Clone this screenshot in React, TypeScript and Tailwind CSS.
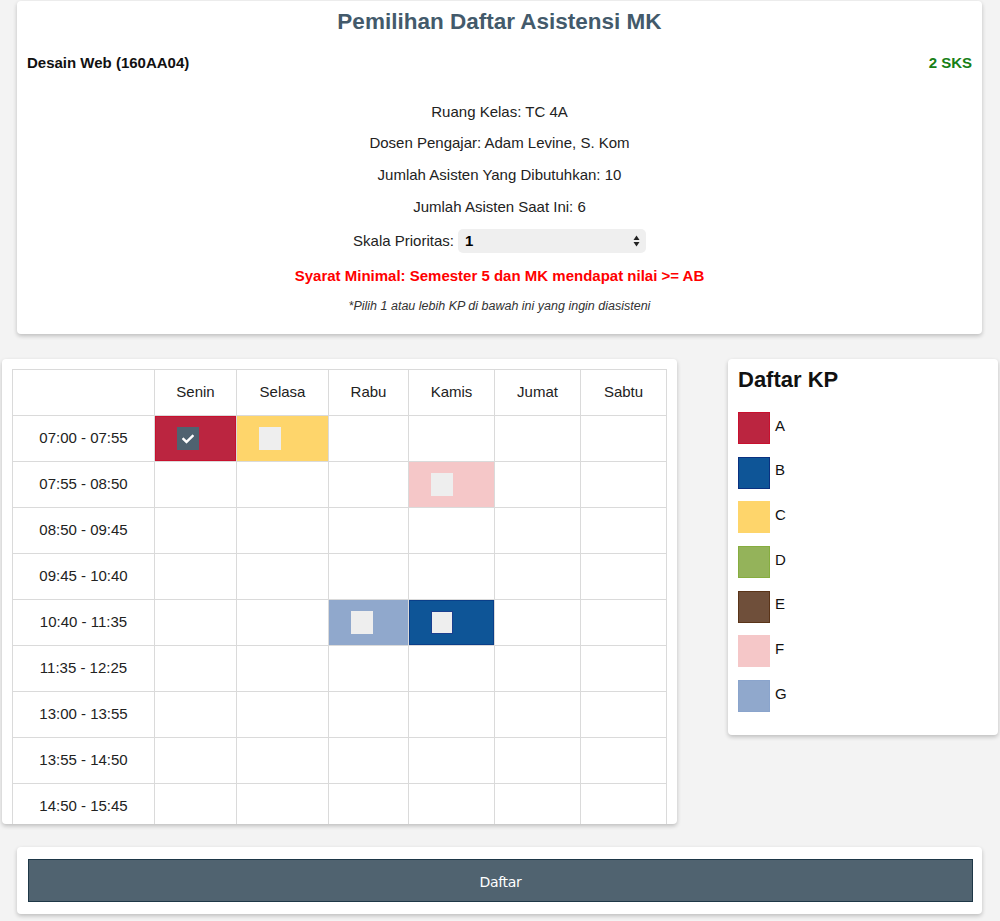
import React from "react";
import { FaCheck } from "react-icons/fa";

const days = ["Senin", "Selasa", "Rabu", "Kamis", "Jumat", "Sabtu"];
const colWidths = ["w-[142px]", "w-[82px]", "w-[92px]", "w-[80px]", "w-[86px]", "w-[86px]", "w-[86px]"];
const times = [
  "07:00 - 07:55",
  "07:55 - 08:50",
  "08:50 - 09:45",
  "09:45 - 10:40",
  "10:40 - 11:35",
  "11:35 - 12:25",
  "13:00 - 13:55",
  "13:55 - 14:50",
  "14:50 - 15:45",
];

type Slot = { bg: string; border: string; checked?: boolean; boxBorder?: string };
const slots: Record<string, Slot> = {
  "0-0": { bg: "bg-[#bb2540]", border: "border-[#c8102e]", checked: true },
  "0-1": { bg: "bg-[#fed56b]", border: "border-[#fed56b]" },
  "1-3": { bg: "bg-[#f5c7c8]", border: "border-[#f5c7c8]" },
  "4-2": { bg: "bg-[#90a8cc]", border: "border-[#90a8cc]" },
  "4-3": { bg: "bg-[#0e5597]", border: "border-[#0a3f8a]", boxBorder: "border-[#1a3f8f]" },
};

const legend = [
  { l: "A", c: "bg-[#bb2540] border-[#c8102e]" },
  { l: "B", c: "bg-[#0e5597] border-[#0a3180]" },
  { l: "C", c: "bg-[#fed56b] border-[#fed56b]" },
  { l: "D", c: "bg-[#94b35a] border-[#86ad3f]" },
  { l: "E", c: "bg-[#6f4f3a] border-[#5a3418]" },
  { l: "F", c: "bg-[#f5c7c8] border-[#f5c7c8]" },
  { l: "G", c: "bg-[#90a8cc] border-[#8aa4cc]" },
];

function Card({ className, children }: { className?: string; children: React.ReactNode }) {
  return (
    <div className={"bg-white rounded-[4px] shadow-[0_2px_4px_rgba(0,0,0,0.22)] " + (className ?? "")}>
      {children}
    </div>
  );
}

export default function App() {
  return (
    <div className="min-h-[921px] bg-[#f3f3f3] font-['Liberation_Sans',Arial,sans-serif] text-[#111] pt-px">
      {/* Top card */}
      <Card className="ml-[17px] mr-[18px] pt-[7px] pb-[20px] px-[10px]">
        <h1 className="text-center text-[22.5px] leading-[28px] font-bold text-[#435a6b]">
          Pemilihan Daftar Asistensi MK
        </h1>
        <div className="mt-[17px] flex justify-between text-[15px] leading-[20px] font-bold">
          <span>Desain Web (160AA04)</span>
          <span className="text-[#168016]">2 SKS</span>
        </div>
        <div className="mt-[29px] flex flex-col items-center text-[15px] leading-[20px] text-[#222]">
          <p>Ruang Kelas: TC 4A</p>
          <p className="mt-[11px]">Dosen Pengajar: Adam Levine, S. Kom</p>
          <p className="mt-[12px]">Jumlah Asisten Yang Dibutuhkan: 10</p>
          <p className="mt-[12px]">Jumlah Asisten Saat Ini: 6</p>
          <div className="mt-[12px] flex items-center gap-[4px]">
            <span>Skala Prioritas:</span>
            <div className="w-[188px] h-[24px] rounded-[5px] bg-[#efefef] flex items-center justify-between pl-[7px] pr-[6px]">
              <span className="text-[15px] font-bold text-black">1</span>
              <svg width="7" height="12" viewBox="0 0 7 12">
                <path d="M3.5 0.5 L6.5 5 L0.5 5 Z" fill="#222" />
                <path d="M3.5 11.5 L6.5 7 L0.5 7 Z" fill="#222" />
              </svg>
            </div>
          </div>
          <p className="mt-[13px] font-bold text-[#ff0000]">
            Syarat Minimal: Semester 5 dan MK mendapat nilai &gt;= AB
          </p>
          <p className="mt-[12px] text-[12.5px] leading-[16px] italic text-[#333]">
            *Pilih 1 atau lebih KP di bawah ini yang ingin diasisteni
          </p>
        </div>
      </Card>

      {/* Middle row */}
      <div className="mt-[25px] flex justify-between items-start pl-[2px] pr-[2px]">
        <Card className="w-[675px] h-[465px] overflow-hidden pt-[10px] pl-[10px]">
          <table className="border-collapse text-[15px] text-[#222] table-fixed">
            <thead>
              <tr className="h-[46px]">
                {["", ...days].map((d, i) => (
                  <th key={i} className={"border border-[#dadada] font-normal text-center " + colWidths[i]}>
                    {d}
                  </th>
                ))}
              </tr>
            </thead>
            <tbody>
              {times.map((t, r) => (
                <tr key={t} className="h-[46px]">
                  <td className="border border-[#dadada] text-center">{t}</td>
                  {days.map((_, c) => {
                    const s = slots[`${r}-${c}`];
                    return (
                      <td key={c} className="border border-[#dadada] p-0">
                        {s ? (
                          <div className={"h-[45px] flex items-center pl-[21px] border " + s.bg + " " + s.border}>
                            {s.checked ? (
                              <div className="w-[22px] h-[23px] bg-[#4f6270] flex items-center justify-center">
                                <FaCheck className="text-white" size={12} />
                              </div>
                            ) : (
                              <div
                                className={
                                  "w-[22px] h-[23px] bg-[#eeeeee] " + (s.boxBorder ? "border " + s.boxBorder : "")
                                }
                              />
                            )}
                          </div>
                        ) : null}
                      </td>
                    );
                  })}
                </tr>
              ))}
            </tbody>
          </table>
        </Card>

        <Card className="w-[270px] pt-[7px] pb-[23px] pl-[10px]">
          <h2 className="text-[22px] leading-[28px] font-bold text-[#111]">Daftar KP</h2>
          <div className="mt-[18px] flex flex-col gap-[12.7px]">
            {legend.map((it) => (
              <div key={it.l} className="flex items-center gap-[5px]">
                <div className={"w-[32px] h-[32px] border " + it.c} />
                <span className="text-[15px] leading-[20px] pb-[5px] text-[#111]">{it.l}</span>
              </div>
            ))}
          </div>
        </Card>
      </div>

      {/* Button card */}
      <Card className="mt-[23px] ml-[17px] mr-[18px] pl-[11px] pr-[9px] pt-[12px] pb-[12px]">
        <button className="w-full h-[43px] bg-[#506370] border border-[#1e3747] text-white text-[14px] font-medium font-['DejaVu_Sans',sans-serif] tracking-[-0.3px] pt-[3px]">
          Daftar
        </button>
      </Card>
    </div>
  );
}
